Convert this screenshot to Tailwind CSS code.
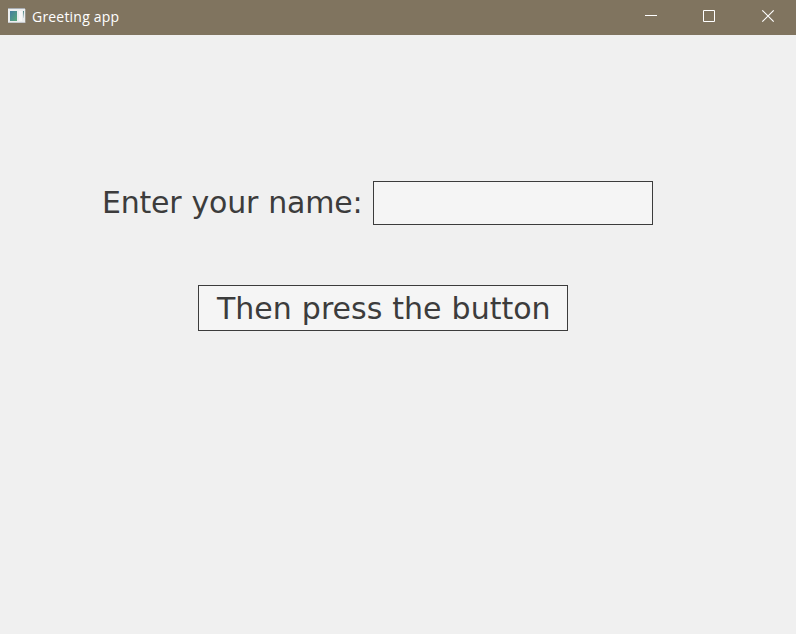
<!DOCTYPE html>
<html lang="en"><head><meta charset="utf-8"><title>Greeting app</title>
<script src="https://cdn.jsdelivr.net/npm/@tailwindcss/browser@4"></script></head>
<body class="w-[796px] h-[634px] overflow-hidden bg-[#f0f0f0] flex flex-col">
<header class="h-[35px] shrink-0 bg-[#80745f] flex text-white">
<div class="flex grow pl-[8px]">
<svg class="mt-[8px] w-[18px] h-[16px] shrink-0" viewBox="0 0 18 16" shape-rendering="crispEdges"><defs><linearGradient id="g" x1="0" y1="0" x2="1" y2="1"><stop stop-color="#447da0"/><stop offset="1" stop-color="#58a878"/></linearGradient><linearGradient id="s" x1="0" y1="0" x2="0" y2="1"><stop stop-color="#4b8584"/><stop offset="1" stop-color="#d5dce0"/></linearGradient></defs><rect width="17" height="15" fill="#eceeef"/><rect width="17" height="1" fill="#a8adb3"/><rect y="14" width="17" height="1" fill="#c5c8cc"/><rect x="17" y="1" width="1" height="14" fill="#9b958a"/><rect x="2" y="3" width="7" height="10" fill="url(#g)"/><rect x="11" y="3" width="3" height="10" fill="#f8f8f8"/><rect x="15" y="3" width="1" height="7" fill="url(#s)"/></svg>
<span class="ml-[6px] mt-[7px] font-['Open_Sans',sans-serif] text-[14px] leading-[20px] tracking-[0.2px] whitespace-nowrap">Greeting app</span></div>
<div class="flex shrink-0">
<svg class="w-[166px] h-[35px]" viewBox="0 0 166 35" fill="none" stroke="white" stroke-width="1"><path d="M15 15.5h12M73.500 10.500h11v11h-11z"/><path stroke-width="1.200" d="M132.300 10.300l11.400 11.400M143.700 10.300l-11.400 11.400"/></svg></div>
</header>
<main class="pt-[146px] font-['DejaVu_Sans',sans-serif] text-[30px] text-[#3c3c3c]">
<div class="flex items-center pl-[102px] h-[44px]"><label for="n" class="w-[271px] shrink-0 whitespace-nowrap leading-[44px] tracking-[-0.25px] [word-spacing:1px]">Enter your name:</label><input id="n" class="w-[280px] h-[44px] border border-[#3c3c3c] bg-[#f5f5f5] outline-none"></div>
<button class="block mt-[60px] ml-[198px] w-[370px] h-[46px] border border-[#3c3c3c] bg-[#f5f5f5] pt-[2px] pl-[18px] text-left leading-[42px] [word-spacing:0.5px] whitespace-nowrap">Then press the button</button>
</main></body></html>
